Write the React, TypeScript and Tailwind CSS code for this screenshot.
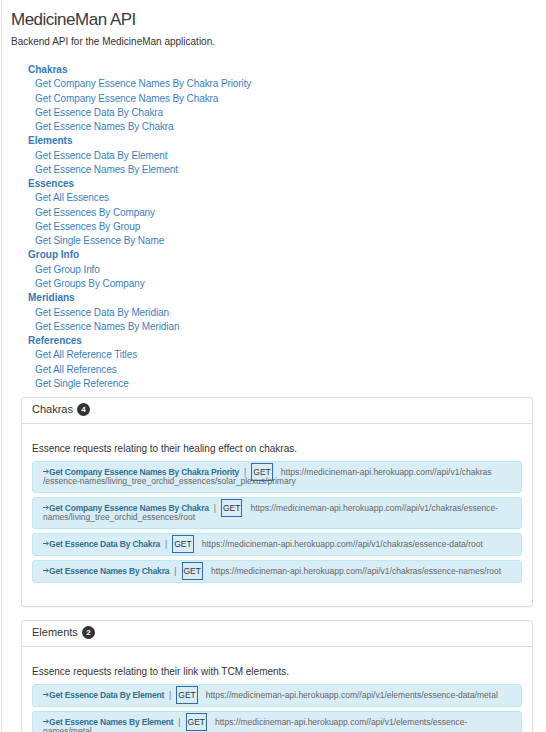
import React from "react";

type NavGroup = { title: string; items: string[] };

const nav: NavGroup[] = [
	{
		title: "Chakras",
		items: [
			"Get Company Essence Names By Chakra Priority",
			"Get Company Essence Names By Chakra",
			"Get Essence Data By Chakra",
			"Get Essence Names By Chakra",
		],
	},
	{
		title: "Elements",
		items: ["Get Essence Data By Element", "Get Essence Names By Element"],
	},
	{
		title: "Essences",
		items: [
			"Get All Essences",
			"Get Essences By Company",
			"Get Essences By Group",
			"Get Single Essence By Name",
		],
	},
	{
		title: "Group Info",
		items: ["Get Group Info", "Get Groups By Company"],
	},
	{
		title: "Meridians",
		items: ["Get Essence Data By Meridian", "Get Essence Names By Meridian"],
	},
	{
		title: "References",
		items: [
			"Get All Reference Titles",
			"Get All References",
			"Get Single Reference",
		],
	},
];

const BASE = "https://medicineman-api.herokuapp.com//api/v1";

type Endpoint = { name: string; url: string[] };
type Section = { title: string; count: number; blurb: string; endpoints: Endpoint[] };

const sections: Section[] = [
	{
		title: "Chakras",
		count: 4,
		blurb: "Essence requests relating to their healing effect on chakras.",
		endpoints: [
			{
				name: "Get Company Essence Names By Chakra Priority",
				url: [
					`${BASE}/chakras`,
					"/essence-names/living_tree_orchid_essences/solar_plexus/primary",
				],
			},
			{
				name: "Get Company Essence Names By Chakra",
				url: [
					`${BASE}/chakras/essence-`,
					"names/living_tree_orchid_essences/root",
				],
			},
			{
				name: "Get Essence Data By Chakra",
				url: [`${BASE}/chakras/essence-data/root`],
			},
			{
				name: "Get Essence Names By Chakra",
				url: [`${BASE}/chakras/essence-names/root`],
			},
		],
	},
	{
		title: "Elements",
		count: 2,
		blurb: "Essence requests relating to their link with TCM elements.",
		endpoints: [
			{
				name: "Get Essence Data By Element",
				url: [`${BASE}/elements/essence-data/metal`],
			},
			{
				name: "Get Essence Names By Element",
				url: [`${BASE}/elements/essence-`, "names/metal"],
			},
		],
	},
	{
		title: "Essences",
		count: 4,
		blurb: "Essence requests for individual essences and groups of essences.",
		endpoints: [
			{ name: "Get All Essences", url: [`${BASE}/essences`] },
			{
				name: "Get Essences By Company",
				url: [`${BASE}/essences/company/living_tree_orchid_essences`],
			},
		],
	},
];

function Arrow() {
	return (
		<svg
			width="6"
			height="5"
			viewBox="0 0 6 5"
			className="inline-block align-[1px]"
			aria-hidden
		>
			<path
				d="M0 2.5H5.3M3.3 0.7L5.3 2.5L3.3 4.3"
				fill="none"
				stroke="#31708f"
				strokeWidth="1"
			/>
		</svg>
	);
}

function EndpointRow({ ep }: { ep: Endpoint }) {
	return (
		<div className="rounded-[3px] border border-[#bce8f1] bg-[#d9edf7] px-[10px] py-[6px] text-[8.5px] leading-[9px]">
			<span className="whitespace-nowrap">
				<Arrow />
				<span className="font-bold tracking-[-0.2px] text-[#31708f]">{ep.name}</span>
				<span className="px-[5px] text-[#777]">|</span>
				<span className="border border-[#2e6da4] px-[1px] py-[3px] text-[#333]">
					GET
				</span>
				<span className="ml-[8px] text-[#666]">{ep.url[0]}</span>
			</span>
			{ep.url[1] && (
				<>
					<br />
					<span className="whitespace-nowrap text-[#666]">{ep.url[1]}</span>
				</>
			)}
		</div>
	);
}

function Panel({ section }: { section: Section }) {
	return (
		<div className="mb-[13px] mr-[13px] ml-[10px] rounded-[3px] border border-[#ddd] bg-white shadow-[0_1px_1px_rgba(0,0,0,0.05)]">
			<div className="flex h-[26px] items-center border-b border-[#ddd] px-[10px] pb-[2px]">
				<span className="text-[11px] text-[#333]">{section.title}</span>
				<span className="ml-[4px] flex h-[13px] w-[13px] items-center justify-center rounded-full bg-[#333] text-[8px] font-bold text-white">
					{section.count}
				</span>
			</div>
			<div className="px-[10px] pt-[18px] pb-[23px]">
				<p className="mb-[5px] text-[10px] leading-[14px] text-[#333]">
					{section.blurb}
				</p>
				<div className="flex flex-col gap-[4px]">
					{section.endpoints.map((ep) => (
						<EndpointRow key={ep.name} ep={ep} />
					))}
				</div>
			</div>
		</div>
	);
}

export default function App() {
	return (
		<div className="ml-px h-screen overflow-hidden border-l border-[#e0e0e0] bg-white pl-[9px] font-['Liberation_Sans',Arial,sans-serif]">
			<h1 className="pt-[10px] text-[17px] leading-[20px] font-normal tracking-[-0.5px] text-[#3a3a3a]">
				MedicineMan API
			</h1>
			<p className="mt-[5px] text-[10px] leading-[14px] text-[#333]">
				Backend API for the MedicineMan application.
			</p>

			<nav className="mt-[14px] pl-[17px] text-[10px] leading-[14.27px]">
				{nav.map((group) => (
					<div key={group.title}>
						<div className="font-bold text-[#337ab7]">{group.title}</div>
						{group.items.map((item) => (
							<div key={item} className="pl-[7px] tracking-[-0.1px] text-[#3a7fc0]">
								{item}
							</div>
						))}
					</div>
				))}
			</nav>

			<div className="mt-[6px]">
				{sections.map((s) => (
					<Panel key={s.title} section={s} />
				))}
			</div>
		</div>
	);
}
